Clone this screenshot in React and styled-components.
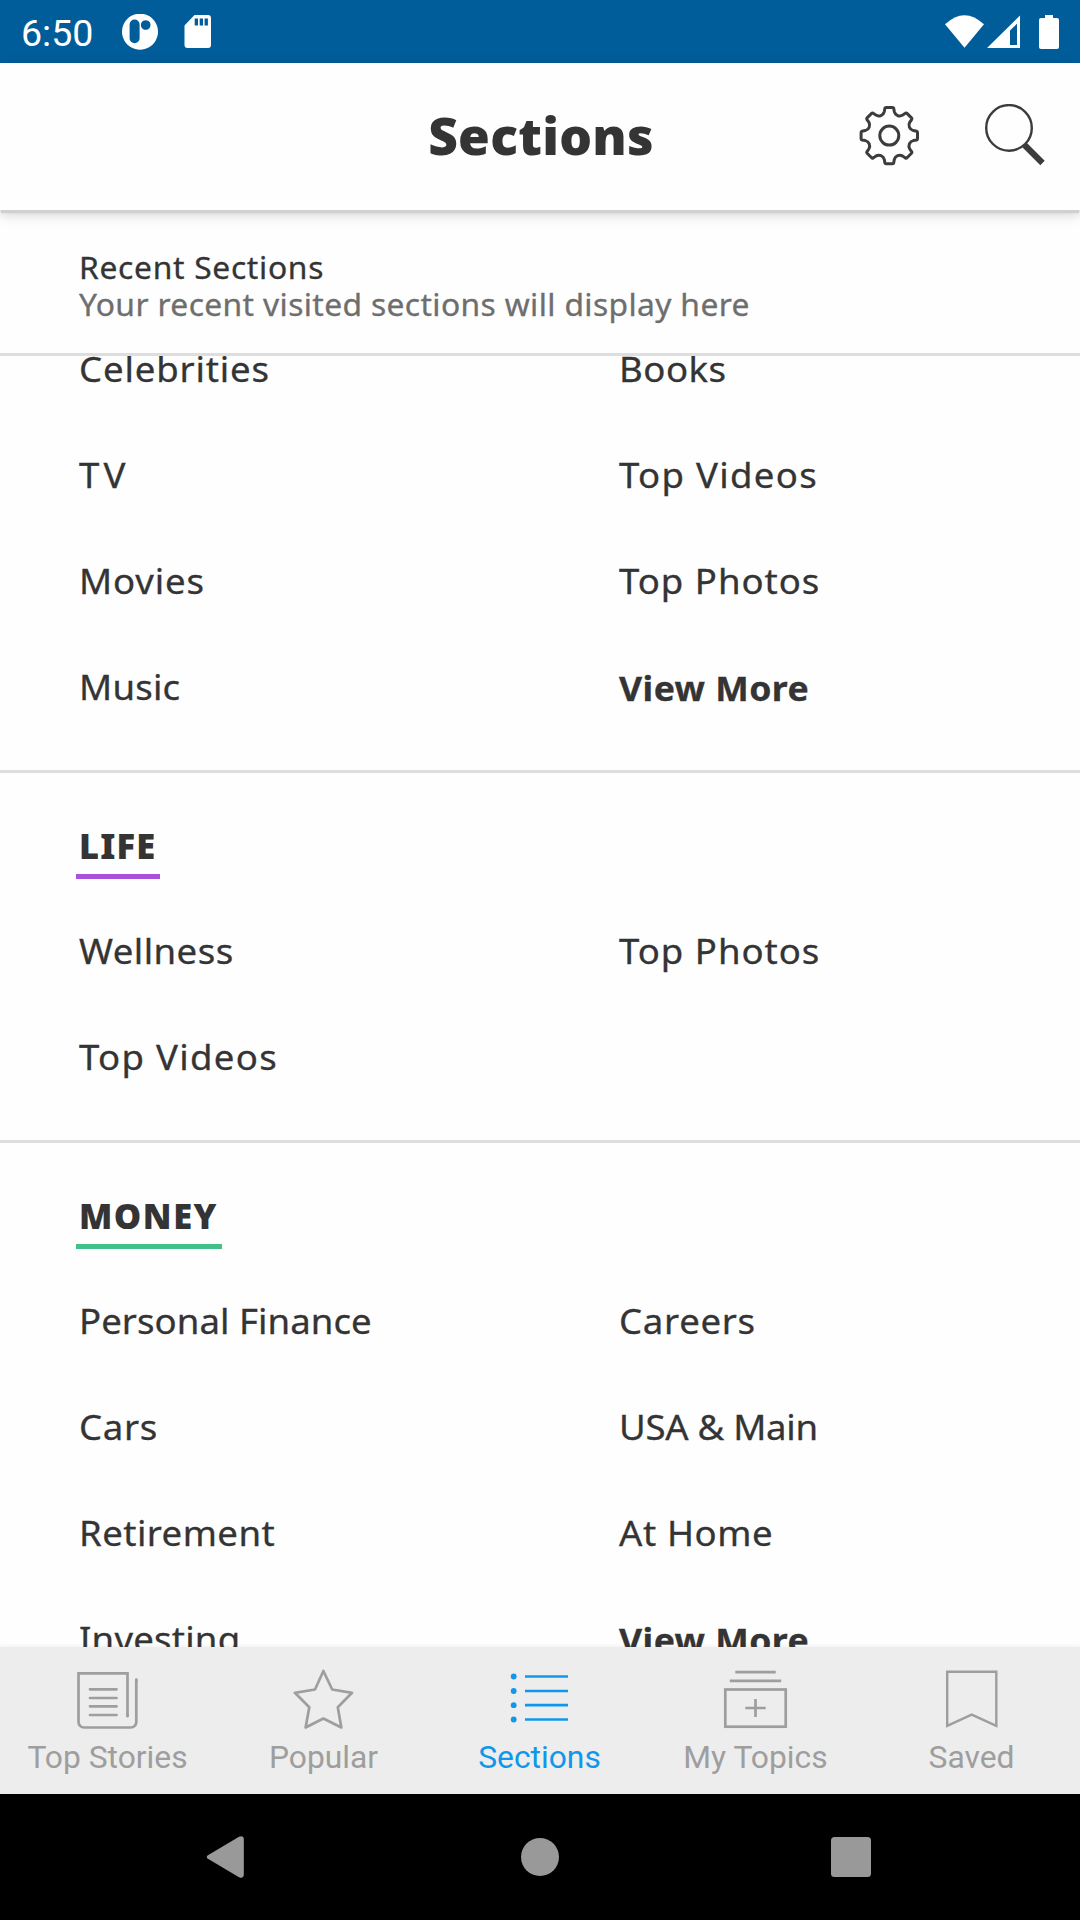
import React from 'react';
import styled, { createGlobalStyle } from 'styled-components';

const GlobalStyle = createGlobalStyle`
  *, *::before, *::after { box-sizing: border-box; }
  body { margin: 0; background: #000; }
  h1, h2, p, ul { margin: 0; padding: 0; }
  svg { display: block; flex: none; }
`;

const ink = '#343434';
const sans = '"Noto Sans", "Open Sans", sans-serif';

const Screen = styled.div`
  width: 1080px;
  height: 1920px;
  display: flex;
  flex-direction: column;
  overflow: hidden;
  background: #fefefe;
  color: ${ink};
  font-family: ${sans};
`;

/* Status bar */
const StatusBar = styled.header`
  flex: none;
  height: 63px;
  display: flex;
  align-items: center;
  padding: 0 20px 0 20px;
  background: #005d9a;
  color: #fff;
`;
const Clock = styled.time`
  width: 101px;
  font: 400 37.600px/44px Roboto, sans-serif;
  padding: 3px 0 0 1px;
`;
const StatusRight = styled.div`
  margin-left: auto;
`;

/* App bar */
const AppBar = styled.div`
  flex: none;
  position: relative;
  z-index: 2;
  height: 147px;
  display: grid;
  grid-template-columns: 1fr auto 1fr;
  align-items: center;
  background: #fefefe;
  box-shadow: 0 4px 1px -1px #d0d0d0, 0 4px 12px rgba(0, 0, 0, 0.2);
`;
const Title = styled.h1`
  grid-column: 2;
  padding: 0 0 4px 2px;
  font: 900 51.500px/60px ${sans};
  letter-spacing: 0.25px;
`;
const Actions = styled.div`
  display: flex;
  justify-content: flex-end;
  gap: 63px;
  padding: 0 34px 2px 0;
`;

/* Recent sections */
const Recent = styled.section`
  flex: none;
  height: 146px;
  padding: 39px 79px 0;
  border-bottom: 3px solid #dedede;
  font-size: 30px;
  line-height: 37px;
  white-space: nowrap;
  -webkit-text-stroke: 0.3px;
`;
const RecentTitle = styled.h2`
  width: fit-content;
  font-size: inherit;
  font-weight: 400;
  letter-spacing: 0.65px;
  transform: scaleX(1.06);
  transform-origin: left;
`;
const RecentHint = styled.p`
  width: fit-content;
  color: #6e6e6e;
  letter-spacing: 0.34px;
  transform: scaleX(1.06);
  transform-origin: left;
`;

/* Section list */
const Scroller = styled.main`
  flex: 1;
  min-height: 0;
  overflow: hidden;
`;
const Section = styled.section`
  padding-bottom: 30px;
  margin-top: ${(p) => (p.$scrolled ? '-40px' : 0)};
  & + & { border-top: 3px solid #dedede; padding-top: 51px; margin-top: 0; }
`;
const Heading = styled.h2`
  width: fit-content;
  margin: 0 0 19px 76px;
  padding: 0 4px 7px 3px;
  border-bottom: 5px solid ${(p) => p.$accent};
  font-size: 34.5px;
  font-weight: 900;
  line-height: 43px;
  letter-spacing: ${(p) => p.$track}px;
`;
const Columns = styled.div`
  display: grid;
  grid-template-columns: 540px 1fr;
`;
const Column = styled.ul`
  list-style: none;
  padding-left: 79px;
`;
const Link = styled.li`
  width: fit-content;
  height: 106px;
  font-size: 34.5px;
  line-height: ${(p) => (p.$strong ? '108px' : '106px')};
  font-weight: ${(p) => (p.$strong ? 700 : 400)};
  letter-spacing: ${(p) => p.$track}px;
  white-space: nowrap;
  transform: scaleX(${(p) => (p.$strong ? 1.03 : 1.06)});
  transform-origin: left;
  -webkit-text-stroke: 0.3px;
`;

/* Bottom tabs */
const Tabs = styled.nav`
  flex: none;
  position: relative;
  height: 147px;
  display: grid;
  grid-template-columns: repeat(5, 1fr);
  background: #ededed;
  box-shadow: 0 -1px 4px rgba(0, 0, 0, 0.06);
`;
const Tab = styled.div`
  display: flex;
  flex-direction: column;
  align-items: center;
  padding-top: 18px;
  color: ${(p) => (p.$active ? '#0f98ea' : '#9e9e9e')};
`;
const TabLabel = styled.span`
  margin: 9px 1px 0 0;
  font: 400 31.800px/38px Roboto, sans-serif;
`;

const SystemNav = styled.footer`
  flex: none;
  height: 126px;
  display: flex;
  align-items: center;
  justify-content: space-between;
  padding: 0 209px 0 206px;
  background: #000;
  color: #999;
`;

const gearPath = (() => {
  const turn = (x, y, deg) => {
    const a = (deg * Math.PI) / 180;
    return `${(x * Math.cos(a) - y * Math.sin(a)).toFixed(2)} ${(x * Math.sin(a) + y * Math.cos(a)).toFixed(2)}`;
  };
  let d = '';
  for (let i = 0; i < 8; i += 1) {
    const a = i * 45;
    d += `${i ? 'L' : 'M'}${turn(-4.4, -27.4, a)}Q${turn(-4.2, -28.2, a)} ${turn(-3.2, -28.2, a)}`;
    d += `L${turn(3.2, -28.2, a)}Q${turn(4.2, -28.2, a)} ${turn(4.4, -27.4, a)}L${turn(5, -24, a)}`;
    d += `A5.6 5.600 0 0 0 ${turn(-5, -24, a + 45)}`;
  }
  return `${d}Z`;
})();

const NotificationIcons = () => (
  <svg width="92" height="36" viewBox="121 14 92 36" fill="#fff">
    <path fillRule="evenodd" d="M140 13.7a18 18 0 1 0 .01 0ZM134.6 19.6a5 5 0 0 1 5 5v13.6a5 5 0 0 1-10 0V24.6a5 5 0 0 1 5-5ZM145.7 20.2a4.8 4.8 0 1 1-.01 0Z" />
    <path fillRule="evenodd" d="M194.5 15H208a3 3 0 0 1 3 3v27a3 3 0 0 1-3 3h-20.500a3 3 0 0 1-3-3V25.500ZM194.700 18.500v7h3.300v-7ZM199.700 18.500v7h3.300v-7ZM204.600 18.500v7h3.300v-7Z" />
  </svg>
);
const SignalIcons = () => (
  <svg width="116" height="36" viewBox="944 13 116 36" fill="#fff">
    <path d="M945 23.300Q964.500 5 984 23.300L964.500 46.700Z" />
    <path fillRule="evenodd" d="M987 47L1020 14.500V47ZM1010 29.500V44h7V22.800Z" />
    <path d="M1045 14h8v3h4a2 2 0 0 1 2 2v27a2 2 0 0 1-2 2h-16a2 2 0 0 1-2-2V19a2 2 0 0 1 2-2h4Z" />
  </svg>
);
const GearIcon = () => (
  <svg width="60" height="64" viewBox="0 0 60 64" fill="none" stroke="#3c3c3c" strokeWidth="3" strokeLinejoin="round">
    <g transform="translate(30.3 31.6)">
      <path d={gearPath} />
      <circle r="9.5" />
    </g>
  </svg>
);
const SearchIcon = () => (
  <svg width="64" height="64" viewBox="0 0 64 64" fill="none" stroke="#3c3c3c">
    <circle cx="27" cy="23.900" r="22.800" strokeWidth="2.400" />
    <path d="M42.500 41L60.500 59" strokeWidth="6.200" />
  </svg>
);

const TabIcon = ({ children, weight = 2.7 }) => (
  <svg width="72" height="64" viewBox="0 0 72 64" fill="none" stroke="currentColor" strokeWidth={weight}>
    {children}
  </svg>
);
const StoriesIcon = () => (
  <TabIcon>
    <path d="M55.500 51.200V8.300H6.500V57a5.500 5.500 0 0 0 5.500 5.500H58.800a5.500 5.500 0 0 0 5.500-5.500V14.500" />
    <path d="M18 24.300H44.500M18 33H44.500M18 41.300H44.500M18 50H44.500M55.500 50v1.200M64.300 16V14.500" strokeLinecap="round" />
  </TabIcon>
);
const StarIcon = () => (
  <TabIcon>
    <path d="M35.400 6L44.200 24.500L64 27.800L49.800 42.200L53.300 62.500L35.400 53.500L17.600 62.500L21.300 42.200L6.900 27.800L27 24.500Z" strokeLinejoin="round" />
  </TabIcon>
);
const ListIcon = () => (
  <TabIcon>
    {[11.5, 26, 40.2, 54.5].map((y) => (
      <g key={y}>
        <circle cx="9.700" cy={y} r="2.900" fill="currentColor" stroke="none" />
        <path d={`M21 ${y}H64`} />
      </g>
    ))}
  </TabIcon>
);
const TopicsIcon = () => (
  <TabIcon>
    <path d="M15.300 7.200H55.700M9.800 15.800H61.200M25.300 43H45.700M35.500 34V52" />
    <rect x="5.300" y="24.500" width="60.400" height="37.200" />
  </TabIcon>
);
const SavedIcon = () => (
  <TabIcon weight={2.4}>
    <path d="M11.200 6.800H60.300V60.900L35.700 49.600L11.200 60.900Z" />
  </TabIcon>
);

const sections = [
  {
    left: [['Celebrities', 0.8], ['TV', 4], ['Movies', 0.8], ['Music', 0.2]],
    right: [['Books', 0.48], ['Top Videos', 1.22], ['Top Photos', 0.92], ['View More', 0.45, true]],
  },
  {
    name: 'LIFE',
    track: 1.1,
    accent: '#a951dd',
    left: [['Wellness', 0.42], ['Top Videos', 1.22]],
    right: [['Top Photos', 0.92]],
  },
  {
    name: 'MONEY',
    track: 1.5,
    accent: '#43c088',
    left: [['Personal Finance', 0.05], ['Cars', 0.6], ['Retirement', 0.42], ['Investing', 0.2]],
    right: [['Careers', 0.67], ['USA & Main', -0.28], ['At Home', 0.57], ['View More', 0.45, true]],
  },
];

const tabs = [
  ['Top Stories', StoriesIcon],
  ['Popular', StarIcon],
  ['Sections', ListIcon],
  ['My Topics', TopicsIcon],
  ['Saved', SavedIcon],
];

const LinkColumn = ({ items }) => (
  <Column>
    {items.map(([label, track, strong]) => (
      <Link key={label} $track={track} $strong={strong}>{label}</Link>
    ))}
  </Column>
);

export default function App() {
  return (
    <Screen>
      <GlobalStyle />
      <StatusBar>
        <Clock>6:50</Clock>
        <NotificationIcons />
        <StatusRight><SignalIcons /></StatusRight>
      </StatusBar>
      <AppBar>
        <Title>Sections</Title>
        <Actions>
          <GearIcon />
          <SearchIcon />
        </Actions>
      </AppBar>
      <Recent>
        <RecentTitle>Recent Sections</RecentTitle>
        <RecentHint>Your recent visited sections will display here</RecentHint>
      </Recent>
      <Scroller>
        {sections.map(({ name, track, accent, left, right }) => (
          <Section key={name || 'top'} $scrolled={!name}>
            {name && <Heading $accent={accent} $track={track}>{name}</Heading>}
            <Columns>
              <LinkColumn items={left} />
              <LinkColumn items={right} />
            </Columns>
          </Section>
        ))}
      </Scroller>
      <Tabs>
        {tabs.map(([label, Icon]) => (
          <Tab key={label} $active={label === 'Sections'}>
            <Icon />
            <TabLabel>{label}</TabLabel>
          </Tab>
        ))}
      </Tabs>
      <SystemNav>
        <svg width="38" height="42" viewBox="0 0 38 42" fill="currentColor">
          <path d="M1.500 19.500L33 .8Q37.500-1 37.800 3V39Q37.500 43 33 41.200L1.500 22.500Q0 21 1.500 19.500Z" />
        </svg>
        <svg width="47" height="38" viewBox="0 0 47 38" fill="currentColor">
          <circle cx="26" cy="19" r="19" />
        </svg>
        <svg width="40" height="40" viewBox="0 0 40 40" fill="currentColor">
          <rect width="40" height="40" rx="3.500" />
        </svg>
      </SystemNav>
    </Screen>
  );
}
